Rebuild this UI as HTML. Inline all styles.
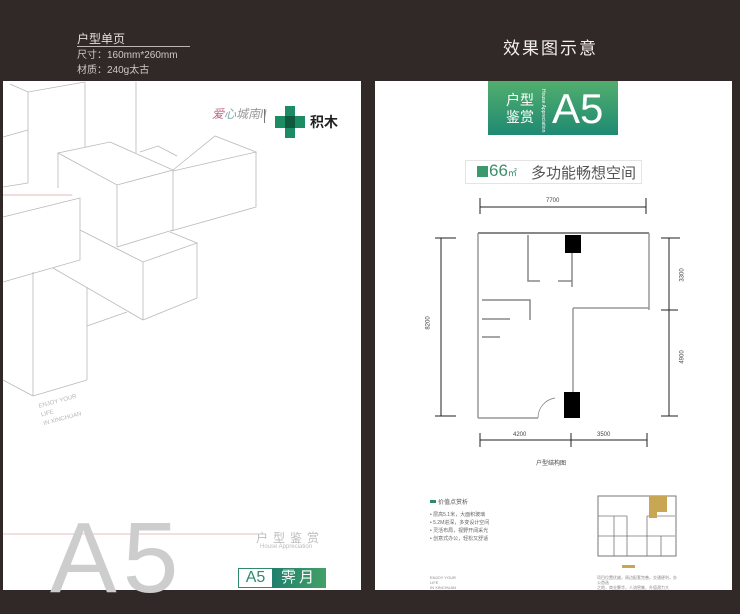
<!DOCTYPE html>
<html><head><meta charset="utf-8"><style>
*{margin:0;padding:0}
body{width:740px;height:590px;background:#312927;position:relative;overflow:hidden;font-family:"Liberation Sans","Noto Sans CJK SC",sans-serif}
.a{position:absolute}
</style></head><body>
<div class="a" style="left:77px;top:30px;color:#e4dedc;font-size:12px">户型单页</div>
<div class="a" style="left:77px;top:46px;width:113px;height:1px;background:#bdb6b4"></div>
<div class="a" style="left:77px;top:48px;color:#cfc8c6;font-size:10px;line-height:15px">尺寸：160mm*260mm<br>材质：240g太古</div>
<div class="a" style="left:503px;top:34px;color:#f4f0ee;font-size:17px;letter-spacing:2px">效果图示意</div>
<div class="a" style="left:3px;top:81px;width:358px;height:509px;background:#fff"></div>
<div class="a" style="left:375px;top:81px;width:357px;height:509px;background:#fff"></div>
<svg class="a" style="left:0;top:0" width="740" height="590" fill="none" stroke="#b9b9b9" stroke-width="0.8">
<path d="M10,84 L28,92 L85,82 M28,92 V183 M85,82 V147 M136,82 V153 M3,187 L28,183"/>
<path d="M58,153 L110,142 L173,170 L117,185 Z M58,153 V188 M117,185 V247 M173,170 V230 M117,247 L173,230"/>
<path d="M173,170 L215,136 L256,152 L173,171 M256,152 V207 L171,231 M140,152 L158,146 L177,156"/>
<path d="M3,217 L80,198 V260 L3,282 M3,137 L28,130"/>
<path d="M80,230 L143,262 L197,243 L170,232 M143,262 V320 M197,243 V298 M143,320 L197,298 M53,268 L143,320"/>
<path d="M33,272 V396 M87,287 V380 M33,396 L87,380 M3,380 L33,396 M87,326 L127,312"/>
<path d="M3,195 H72" stroke="#d9a0a0"/>
<path d="M3,534 H258" stroke="#e3aaaa"/>
</svg>
<div class="a" style="left:38px;top:403px;color:#b5b5b5;font-size:6px;line-height:9px;transform:rotate(-15deg);transform-origin:0 0">ENJOY YOUR<br>LIFE<br>IN XINCHUAN</div>
<div class="a" style="left:50px;top:508px;color:#cdcdcd;font-size:100px;letter-spacing:6px;line-height:100px;font-family:'Liberation Sans',sans-serif">A5</div>
<div class="a" style="left:256px;top:529px;color:#bdbdbd;font-size:12px;letter-spacing:5px">户型鉴赏</div>
<div class="a" style="left:260px;top:544px;color:#bdbdbd;font-size:6px">House Appreciation</div>
<div class="a" style="left:238px;top:568px;width:33px;height:18px;border:1px solid #2f8a70;color:#2f8a70;font-size:16px;line-height:18px;text-align:center">A5</div>
<div class="a" style="left:272px;top:568px;width:54px;height:20px;background:linear-gradient(90deg,#1f7f6c,#43a068);color:#fff;font-size:15px;line-height:20px;text-align:center;letter-spacing:3px">霁月</div>
<div class="a" style="left:212px;top:105px;font-size:12px;color:#c06080;font-style:italic">爱<span style="color:#7aa">心</span><span style="color:#999">城南II</span></div>
<div class="a" style="left:264px;top:109px;width:1px;height:14px;background:#777"></div>
<svg class="a" style="left:273px;top:104px" width="34" height="36"><path d="M12,2h10v10h10v12h-10v10h-10v-10h-10v-12h10z" fill="#1c8c65"/><rect x="12" y="12" width="10" height="12" fill="#0d5a40"/></svg>
<div class="a" style="left:310px;top:112px;font-size:14px;font-weight:bold;color:#222">积木</div>
<div class="a" style="left:488px;top:81px;width:130px;height:54px;background:linear-gradient(180deg,#52ae6e,#1f8a72);color:#fff"></div>
<div class="a" style="left:506px;top:92px;color:#fff;font-size:14px;line-height:17px">户型<br>鉴赏</div>
<div class="a" style="left:540px;top:89px;color:#fff;font-size:5px;writing-mode:vertical-rl">House Appreciation</div>
<div class="a" style="left:552px;top:86px;color:#fff;font-size:42px;font-family:'Liberation Sans',sans-serif;line-height:46px">A5</div>
<div class="a" style="left:465px;top:160px;width:175px;height:22px;border:1px solid #e4e4e4"></div>
<div class="a" style="left:477px;top:166px;width:11px;height:11px;background:#3b9a6c"></div>
<div class="a" style="left:489px;top:161px;color:#3a8f6a;font-size:17px">66<span style="font-size:9px">㎡</span></div>
<div class="a" style="left:531px;top:162px;color:#555;font-size:15px">多功能畅想空间</div>
<svg class="a" style="left:0;top:0" width="740" height="590" fill="none" stroke="#222" stroke-width="1">
<path d="M480,198 V214 M646,198 V214 M480,207 H646"/>
<path d="M478,233 H649" stroke="#888" stroke-width="2"/>
<path d="M649,233 V310 M573,308 H649 M573,308 V393 M478,233 V418 M478,418 H538" stroke="#999" stroke-width="1.5"/>
<path d="M528,235 V281 H540 M558,281 H572 M572,250 V287 M482,300 H530 V320 M482,319 H510 M482,337 H500" stroke="#888" stroke-width="1.5"/>
<path d="M538,418 A20,20 0 0 1 555,398" stroke="#777" stroke-width="0.7"/>
<rect x="565" y="235" width="16" height="18" fill="#000" stroke="none"/>
<rect x="564" y="392" width="16" height="26" fill="#000" stroke="none"/>
<path d="M441,238 V416 M435,238 H456 M435,416 H456"/>
<path d="M669,238 V416 M661,238 H680 M661,310 H678 M661,416 H678"/>
<path d="M480,433 V447 M571,433 V447 M647,433 V447 M480,440 H647"/>
</svg>
<div class="a" style="left:546px;top:198px;font-size:6px;color:#444">7700</div>
<div class="a" style="left:422px;top:320px;font-size:6px;color:#444;transform:rotate(-90deg)">8200</div>
<div class="a" style="left:676px;top:272px;font-size:6px;color:#444;transform:rotate(-90deg)">3300</div>
<div class="a" style="left:676px;top:354px;font-size:6px;color:#444;transform:rotate(-90deg)">4900</div>
<div class="a" style="left:513px;top:432px;font-size:6px;color:#444">4200</div>
<div class="a" style="left:597px;top:432px;font-size:6px;color:#444">3500</div>
<div class="a" style="left:536px;top:458px;font-size:6px;color:#444">户型结构图</div>
<div class="a" style="left:430px;top:500px;width:6px;height:3px;background:#2f8a6a"></div>
<div class="a" style="left:438px;top:497px;font-size:6px;color:#555">价值点赏析</div>
<div class="a" style="left:430px;top:511px;font-size:5px;color:#666;line-height:8px">• 层高5.1米，大面积玻璃<br>• 5.2M进深，多变设计空间<br>• 灵活布局，视野开阔采光<br>• 创意式办公，轻松又舒适</div>
<div class="a" style="left:430px;top:575px;font-size:4px;color:#888;line-height:5px">ENJOY YOUR<br>LIFE<br>IN XINCHUAN</div>
<svg class="a" style="left:597px;top:494px" width="80" height="65" fill="none" stroke="#777" stroke-width="1">
<rect x="1" y="2" width="78" height="60"/>
<path d="M1,22H30M50,22H78M17,22V62M30,22V42M50,22V42M1,42H78M30,42V62M50,42V62M64,42V62" stroke-width="0.8"/>
<path d="M52,2H70V18H60V24H52Z" fill="#c9a654" stroke="none"/>
</svg>
<div class="a" style="left:622px;top:565px;width:13px;height:3px;background:#c9a654"></div>
<div class="a" style="left:597px;top:575px;font-size:4px;color:#888;line-height:5px;width:80px">项目位置优越，周边配套完善，交通便利，办公首选<br>之地，商业繁华，人流密集，升值潜力大</div>
</body></html>
